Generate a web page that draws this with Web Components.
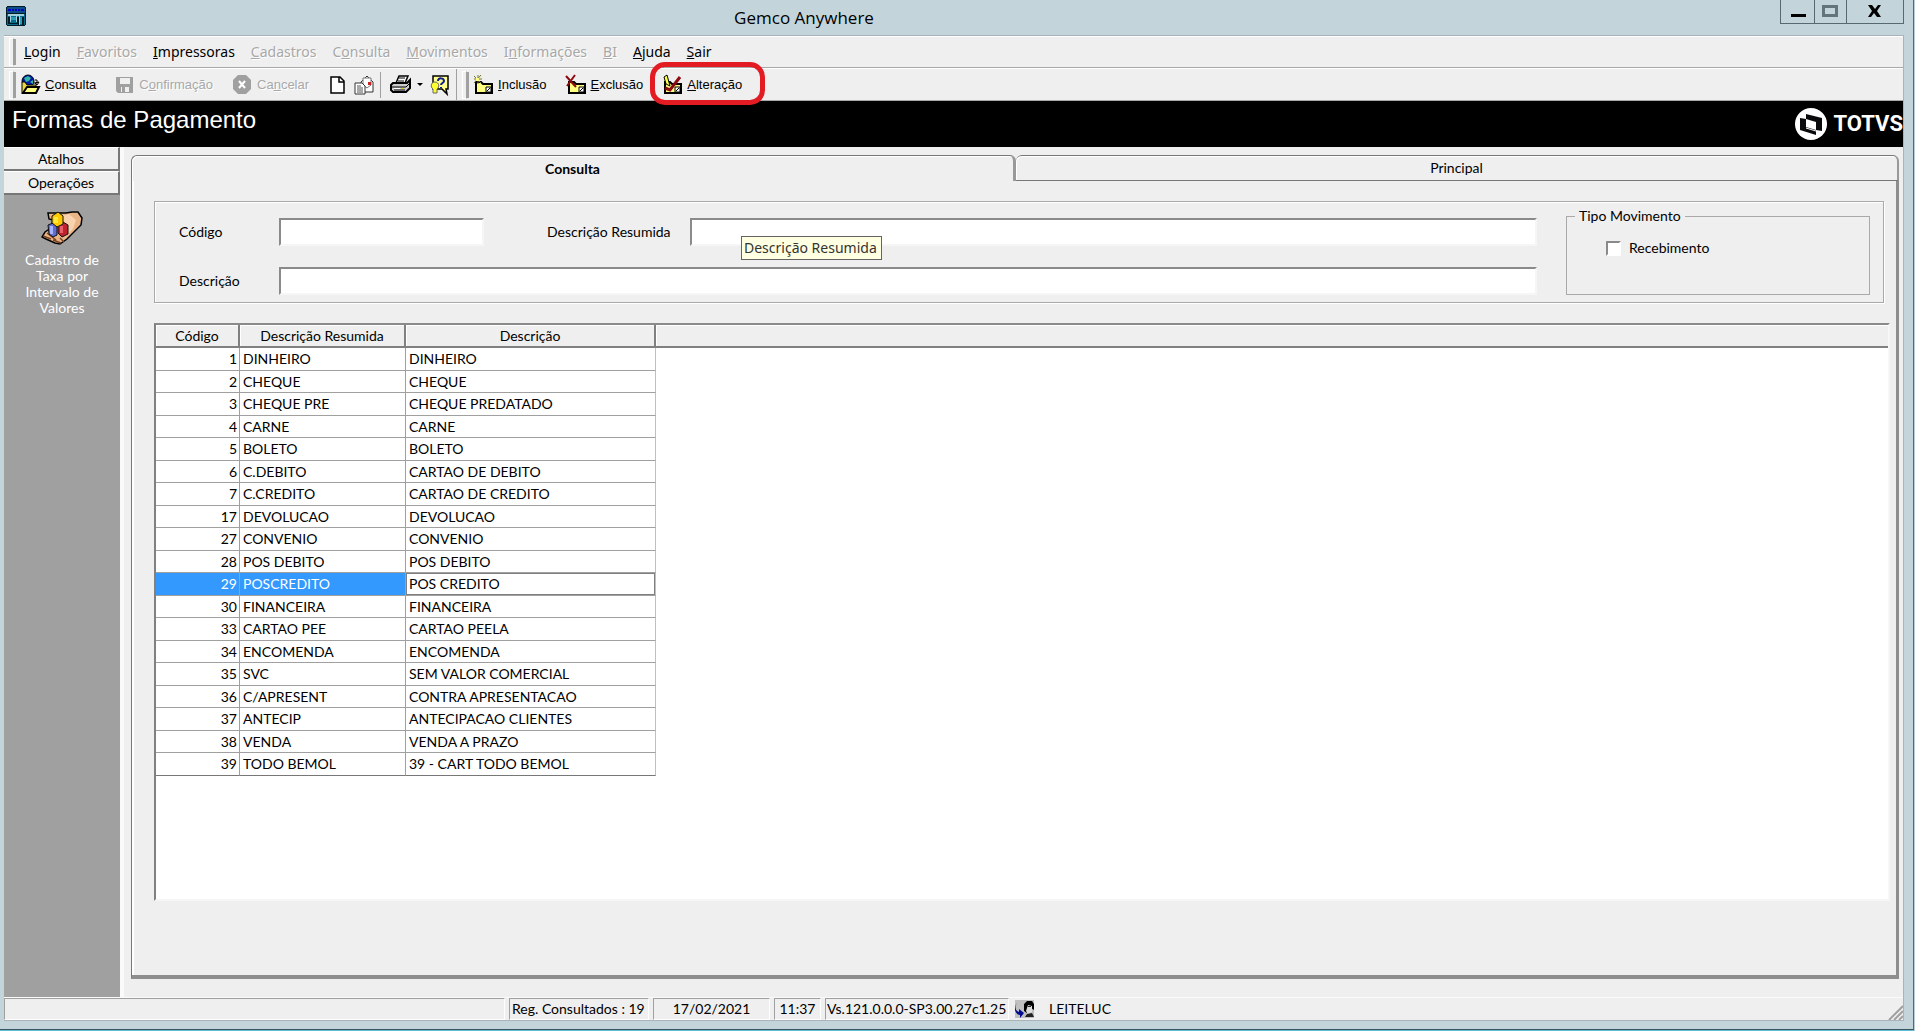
<!DOCTYPE html>
<html lang="pt-BR">
<head>
<meta charset="utf-8">
<title>Gemco Anywhere</title>
<style>
    html, body { height: 100%; margin: 0; }
    body { background: #c3d5db; color: #000; font: 14px/16px Lato, "Liberation Sans", sans-serif; }
</style>
</head>
<body>
<gemco-window>
    <title-bar slot="title">Gemco Anywhere</title-bar>

    <menu-bar slot="menu">
        <menu-item><u>L</u>ogin</menu-item>
        <menu-item disabled><u>F</u>avoritos</menu-item>
        <menu-item><u>I</u>mpressoras</menu-item>
        <menu-item disabled><u>C</u>adastros</menu-item>
        <menu-item disabled>C<u>o</u>nsulta</menu-item>
        <menu-item disabled><u>M</u>ovimentos</menu-item>
        <menu-item disabled>I<u>n</u>formações</menu-item>
        <menu-item disabled><u>B</u>I</menu-item>
        <menu-item><u>A</u>juda</menu-item>
        <menu-item><u>S</u>air</menu-item>
    </menu-bar>

    <tool-bar slot="tools"></tool-bar>
    <page-banner slot="banner">Formas de Pagamento</page-banner>

    <side-bar slot="side">
        <span slot="label">Cadastro de Taxa por Intervalo de Valores</span>
    </side-bar>

    <tab-pages>
        <span slot="tab1">Consulta</span>
        <span slot="tab2">Principal</span>
        <filter-box></filter-box>
        <data-grid></data-grid>
    </tab-pages>

    <status-bar slot="status"></status-bar>
</gemco-window>

<script>
class GemcoWindow extends HTMLElement {
    constructor() {
        super();
        this.attachShadow({ mode: 'open' });
        this.shadowRoot.innerHTML = `
            <style>
                :host { display: flex; flex-direction: column; min-height: 100vh; box-sizing: border-box; border-right: 1px solid #b8cdd6; }
                .frame { flex: 1; display: flex; flex-direction: column; padding: 0 9px 8px 4px; border-right: 1px solid #566a70; border-bottom: 1px solid #39565f; }
                .client { flex: 1; display: flex; flex-direction: column; background: #efefef; border: 1px solid #a9b4b8; border-left: 0; }
                .work { flex: 1; display: flex; }
                .work ::slotted(tab-pages) { flex: 1; }
                .task { height: 1px; background: #5fbdd5; }
            </style>
            <div class="frame">
                <slot name="title"></slot>
                <div class="client">
                    <slot name="menu"></slot>
                    <slot name="tools"></slot>
                    <slot name="banner"></slot>
                    <div class="work">
                        <slot name="side"></slot>
                        <slot></slot>
                    </div>
                    <slot name="status"></slot>
                </div>
            </div>
            <div class="task"></div>
        `;
    }
}
customElements.define('gemco-window', GemcoWindow);


class TitleBar extends HTMLElement {
    constructor() {
        super();
        this.attachShadow({ mode: 'open' });
        this.shadowRoot.innerHTML = `
            <style>
                :host { display: grid; grid-template-columns: 1fr auto 1fr; height: 35px; font: 17px/24px "Open Sans", "Noto Sans", sans-serif; }
                .app { margin: 6px 0 0 2px; }
                .text { padding: 6px 300px 0 0; }
                .buttons { display: flex; justify-self: end; height: 23px; border: 1px solid #566a70; border-top: 0; }
                button { width: 34px; padding: 0; border: 0; border-right: 1px solid #566a70; background: none; }
                button:nth-child(2) { width: 32px; }
                button:last-child { width: 56px; border: 0; }
                svg { display: block; }
            </style>
            <svg class="app" width="20" height="20" viewBox="0 0 20 20">
                <path d="M1 1h18v18H1z" fill="#086a8c"/>
                <path d="M0 1h20v5l-1 2H1L0 6z" fill="#0b4f86"/>
                <path d="M2 3h3v2H2zM6 3h2v2H6zM9 3h2v2H9zM12 3h2v2h-2zM15 3h3v2h-3z" fill="#0000c8"/>
                <path d="M2 8h16v2H2z" fill="#9fd0dc"/>
                <path d="M2 11h2v6h7v-6h2v8h-1v-1H2zM16 11h2v8h-2z" fill="#001c26"/>
                <path d="M4 10h1v6H4zM10 10h1v6h-1zM13 10h1v9h-1z" fill="#9fd0dc"/>
                <path d="M5 11h5v3H5zM14 11h2v7h-2z" fill="#2b9bb8"/>
                <path d="M1 .5h18M.5 1v18M19.5 1v18M1 19.500h18M1 7.500h18" stroke="#001c26" fill="none"/>
            </svg>
            <div class="text"><slot></slot></div>
            <div class="buttons">
                <button aria-label="Minimizar"><svg width="33" height="22"><path d="M10 13h15v3H10z"/></svg></button>
                <button aria-label="Maximizar"><svg width="31" height="22"><path d="M8.500 5.500h13v9h-13z" fill="none" stroke="#63757b" stroke-width="3"/></svg></button>
                <button aria-label="Fechar"><svg width="56" height="22"><path d="M21 4h4l3 4 3-4h3l-4 6 4 6h-4l-3-4-3 4h-3l4-6z"/></svg></button>
            </div>
        `;
    }
}
customElements.define('title-bar', TitleBar);


class MenuBar extends HTMLElement {
    constructor() {
        super();
        this.attachShadow({ mode: 'open' });
        this.shadowRoot.innerHTML = `
            <style>
                :host { display: flex; align-items: center; height: 32px; box-sizing: border-box; padding-left: 5px; border-top: 1px solid #fff; border-bottom: 1px solid #a9a9a9; }
                .grip { width: 3px; height: 26px; border: 1px solid #fff; border-right-color: #a0a0a0; box-shadow: 3px 0 0 -1px #a0a0a0; margin-right: 2px; }
            </style>
            <span class="grip"></span>
            <slot></slot>
        `;
    }
}
customElements.define('menu-bar', MenuBar);


class MenuItem extends HTMLElement {
    constructor() {
        super();
        this.attachShadow({ mode: 'open' });
        this.shadowRoot.innerHTML = `
            <style>
                :host { display: block; }
                button { padding: 0 8px; border: 0; background: none; color: #000; font: 14px/24px "Noto Sans", "Open Sans", sans-serif; }
                button:disabled { color: #a8a8a8; text-shadow: 1px 1px 0 #fff; }
            </style>
            <button${this.hasAttribute('disabled') ? ' disabled' : ''}><slot></slot></button>
        `;
    }
}
customElements.define('menu-item', MenuItem);


// folder used by the three record buttons
const folder = `
    <path d="M3 8h5l2 2h9v9H3z" fill="#ffff80" stroke="#000" stroke-width="2"/>
    <path d="M13 13h5v5h-5z" fill="#fff" stroke="#000"/><path d="M14 17l3-3" stroke="#000"/>`;

class ToolBar extends HTMLElement {
    constructor() {
        super();
        this.attachShadow({ mode: 'open' });
        this.shadowRoot.innerHTML = `
            <style>
                :host { display: flex; height: 33px; box-sizing: border-box; padding-left: 5px; border-top: 1px solid #fff; border-bottom: 1px solid #a9a9a9; }
                .grip { align-self: center; width: 3px; height: 26px; border: 1px solid #fff; border-right-color: #a0a0a0; box-shadow: 3px 0 0 -1px #a0a0a0; margin-right: 6px; }
                .group { display: flex; align-items: center; border-right: 1px solid #a0a0a0; margin-right: 5px; }
                .sep { width: 1px; height: 26px; background: #a0a0a0; margin-right: 9px; }
                button { display: flex; align-items: center; gap: 5px; height: 28px; padding: 0; margin-right: 19px; border: 0; background: none; color: #000; font: 13px/16px "Liberation Sans", sans-serif; }
                button:disabled { color: #a8a8a8; text-shadow: 1px 1px 0 #fff; }
                button.icon { margin-right: 6px; }
                .marked { position: relative; }
                .mark { position: absolute; inset: -9px -23px -6px -12px; border: 5px solid #e31b23; border-radius: 15px; pointer-events: none; z-index: 1; }
                svg { display: block; overflow: visible; }
            </style>
            <span class="grip"></span>
            <div class="group">
                <button>
                    <svg width="20" height="22" viewBox="0 0 20 22">
                        <circle cx="8" cy="7" r="6" fill="#0018a8" stroke="#001"/>
                        <path d="M4 4l4-2 3 2-2 3-3 1zM10 8l3-2v4z" fill="#30b8a0"/>
                        <path d="M2 8h3l2 3h9v8H2z" fill="#e8d840" stroke="#000"/>
                        <path d="M3 19l4-6h12l-3 6z" fill="#ffff80" stroke="#000" stroke-width="2"/>
                        <path d="M14 9h3v-3h-2M19 8l-2 3-2-2z" fill="none" stroke="#000"/>
                    </svg>
                    <span><u>C</u>onsulta</span>
                </button>
                <button disabled>
                    <svg width="19" height="20" viewBox="0 0 19 20">
                        <path d="M1 2h17v16H3l-2-2z" fill="#a0a0a0"/><path d="M5 3h10v6H5zM6 12h8v5H6z" fill="#efefef"/><path d="M7 12h3v5H7z" fill="#a0a0a0"/>
                    </svg>
                    <span>C<u>o</u>nfirmação</span>
                </button>
                <button disabled>
                    <svg width="20" height="20" viewBox="0 0 20 20">
                        <path d="M6 0h8l5 5v9l-5 5H6l-5-5V5z" fill="#a0a0a0"/><path d="M7 6l6 7M13 6l-6 7" stroke="#fff" stroke-width="2"/>
                    </svg>
                    <span>Ca<u>n</u>celar</span>
                </button>
                <button class="icon" aria-label="Novo">
                    <svg width="20" height="20" viewBox="0 0 20 20"><path d="M3 2h9l4 4v12H3z" fill="#fff" stroke="#000" stroke-width="1.500"/><path d="M11 2v5h5" fill="none" stroke="#000" stroke-width="1.500"/></svg>
                </button>
                <button class="icon" aria-label="Visualizar">
                    <svg width="20" height="20" viewBox="0 0 20 20">
                        <path d="M7 7l6-6 6 6v10H7z" fill="#fff" stroke="#333"/><path d="M9 3h8v7l-4 3-4-3z" fill="#fff" stroke="#777"/><path d="M14 7h3v3h-3z" fill="#c22"/>
                        <path d="M1 8h7l3 3v8H1z" fill="#fff" stroke="#333"/><path d="M3 11h4M3 13h6M3 15h6M3 17h6" stroke="#555"/>
                    </svg>
                </button>
                <span class="sep"></span>
                <button class="icon" aria-label="Imprimir">
                    <svg width="34" height="20" viewBox="0 0 34 20">
                        <path d="M6 8l3-7h9l-3 7z" fill="#fff" stroke="#000" stroke-width="1.500"/><path d="M9 3h6M8 6h6" stroke="#000"/>
                        <path d="M3 8h14l3-3v8l-4 4H3l-2-2v-5z" fill="#ccc" stroke="#000" stroke-width="2"/><path d="M2 12h14l3-3M4 15h11" stroke="#000" fill="none"/><path d="M4 13h6v1H4z" fill="#fff"/><path d="M11 13h3v1h-3z" fill="#dd0"/>
                        <path d="M27 8h6l-3 3z"/>
                    </svg>
                </button>
                <button class="icon" aria-label="Ajuda">
                    <svg width="20" height="20" viewBox="0 0 20 20">
                        <path d="M3 1h15v13h-2l1 5-5-5H3z" fill="#ffff90" stroke="#000" stroke-width="1.500"/>
                        <path d="M8 6c0-4 6-3 6 0 0 2-3 2-3 4M11 12v1" fill="none" stroke="#111c90" stroke-width="2"/>
                        <path d="M5 7c-4 0-5 5-2 7v4h4v-4c3-2 2-7-2-7z" fill="#ffff30" stroke="#666"/>
                    </svg>
                </button>
            </div>
            <span class="grip"></span>
            <div class="group">
                <button>
                    <svg width="20" height="22" viewBox="0 0 20 22">${folder}<path d="M1 2l7 7M8 1L1 9M5 1v9M1 5h8" stroke="#77772a"/><path d="M3 4h3v3H3z" fill="#ffff80"/></svg>
                    <span><u>I</u>nclusão</span>
                </button>
                <button>
                    <svg width="20" height="22" viewBox="0 0 20 22">${folder}<path d="M0 2l10 11M9 1L1 12" stroke="#8c0b10" stroke-width="2"/></svg>
                    <span><u>E</u>xclusão</span>
                </button>
                <button class="marked">
                    <svg width="20" height="22" viewBox="0 0 20 22">${folder}<path d="M2 3l3-2 3 11-4-2z" fill="#ffff40" stroke="#000"/><path d="M3 14l5 2L18 3" fill="none" stroke="#8c0b10" stroke-width="3"/></svg>
                    <span><u>A</u>lteração</span>
                    <span class="mark"></span>
                </button>
            </div>
        `;
    }
}
customElements.define('tool-bar', ToolBar);


class PageBanner extends HTMLElement {
    constructor() {
        super();
        this.attachShadow({ mode: 'open' });
        this.shadowRoot.innerHTML = `
            <style>
                :host { display: flex; justify-content: space-between; height: 46px; padding-left: 8px; background: #000; color: #fff; }
                h1 { margin: 3px 0 0; font: 24px/32px "Liberation Sans", sans-serif; }
                .logo { display: flex; align-items: center; gap: 6px; font: bold 22px/32px Roboto, "Liberation Sans", sans-serif; }
            </style>
            <h1><slot></slot></h1>
            <div class="logo">
                <svg width="32" height="32" viewBox="0 0 32 32">
                    <circle cx="16" cy="16" r="16" fill="#fff"/>
                    <path d="M11 6l16 4v13l-6-1v5L5 22V10l6 1z" fill="#0a0a0c"/>
                    <path d="M11 11l10 3v8l-10-3z" fill="#fff"/>
                    <path d="M11 20l10 3" fill="none" stroke="#fff"/>
                </svg>
                <span>TOTVS</span>
            </div>
        `;
    }
}
customElements.define('page-banner', PageBanner);


class SideBar extends HTMLElement {
    constructor() {
        super();
        this.attachShadow({ mode: 'open' });
        this.shadowRoot.innerHTML = `
            <style>
                :host { display: flex; flex-direction: column; width: 116px; background: #a0a0a0; border-right: 4px solid #fafafa; }
                button { height: 24px; padding: 0; border: 1px solid; border-width: 1px 2px 2px 0; border-color: #fff #777 #777; background: #efefef; color: #000; font: inherit; }
                a { display: flex; flex-direction: column; align-items: center; padding: 16px 18px 0; color: #fff; text-align: center; text-decoration: none; }
                svg { margin-bottom: 7px; }
            </style>
            <button>Atalhos</button>
            <button>Operações</button>
            <a href="#">
                <svg width="42" height="34" viewBox="0 0 42 34">
                    <path d="M7 2h18l6-1h6l4 6-1 7-14 14-7 5-5-1-9-4-4-2 3-5 6-4 2-8-4-1z" fill="#e9b487" stroke="#000" stroke-width="1.500"/>
                    <path d="M20 5l8-2 7 6-3 9-8 8" fill="#f8d3ae"/>
                    <path d="M2 25l8 3M6 22l9 7M12 29l8 3M19 27l4 4" stroke="#7a4322" stroke-width="1.500"/>
                    <path d="M7 14l5-2 4 3v9l-4 2-4-3z" fill="#5f6fd0" stroke="#111"/><path d="M9 15h3v8H9z" fill="#a8b4ff"/>
                    <path d="M17 14l5-3 5 3v9l-6 3-4-4z" fill="#c2222d" stroke="#111"/><path d="M19 15h3v7h-3z" fill="#e8606a"/>
                    <path d="M11 5l6-4 5 4v8l-6 3-5-4z" fill="#ffc800" stroke="#111"/><path d="M13 6h4v6h-4z" fill="#ffe838"/>
                </svg>
                <slot name="label"></slot>
            </a>
        `;
    }
}
customElements.define('side-bar', SideBar);


class TabPages extends HTMLElement {
    constructor() {
        super();
        this.attachShadow({ mode: 'open' });
        this.shadowRoot.innerHTML = `
            <style>
                :host { display: flex; flex-direction: column; padding: 8px 4px 18px 7px; }
                .tabs { display: flex; }
                button { flex: 1; height: 26px; padding: 0; border: 1px solid #777; border-right: 3px solid #999; border-bottom: 0; border-radius: 6px 6px 0 0; background: #efefef; box-shadow: inset 1px 1px 0 #fff; color: #000; font: inherit; }
                button.on { font-weight: bold; }
                button + button { border-left: 0; border-bottom: 1px solid #777; border-right-width: 2px; }
                .page { flex: 1; display: flex; flex-direction: column; gap: 20px; padding: 20px 6px 74px 22px; border: 1px solid #777; border-width: 0 3px 4px 1px; border-right-color: #8e8e8e; border-bottom-color: #8e8e8e; box-shadow: inset 2px 0 0 #fff; }
            </style>
            <div class="tabs" role="tablist">
                <button class="on" role="tab" aria-selected="true"><slot name="tab1"></slot></button>
                <button role="tab"><slot name="tab2"></slot></button>
            </div>
            <div class="page"><slot></slot></div>
        `;
    }
}
customElements.define('tab-pages', TabPages);


class FilterBox extends HTMLElement {
    constructor() {
        super();
        this.attachShadow({ mode: 'open' });
        this.shadowRoot.innerHTML = `
            <style>
                :host { display: flex; box-sizing: border-box; height: 102px; margin-right: 6px; padding: 12px 13px 0 24px; border: 1px solid #a9a9a9; box-shadow: 1px 1px 0 #fff, inset 1px 1px 0 #fff; }
                form { flex: 1; display: grid; grid-template-columns: 100px 205px 63px 143px 1fr; grid-auto-rows: 28px; row-gap: 21px; align-items: center; padding-top: 4px; margin-right: 29px; }
                input[type=text] { display: block; width: 100%; height: 28px; box-sizing: border-box; border: 2px solid; border-color: #8a8a8a #f6f6f6 #f6f6f6 #8a8a8a; background: #fff; font: inherit; }
                label[for=resumida] { grid-column: 4; }
                .wide { grid-column: 2 / -1; }
                .hint { position: relative; grid-column: 5; }
                .tip { position: absolute; left: 51px; top: 18px; padding: 2px 4px 2px 2px; border: 1px solid #646464; background: #ffffe1; color: #333; font: 14px/18px "Noto Sans", "Open Sans", sans-serif; white-space: nowrap; }
                fieldset { width: 304px; height: 87px; box-sizing: border-box; margin: -6px 0 0; padding: 16px 39px 0; border: 1px solid #a9a9a9; }
                legend { margin-left: -31px; padding: 0 4px; }
                .check { display: flex; align-items: center; gap: 8px; }
                .check input { appearance: none; width: 15px; height: 15px; margin: 0; border: 2px solid; border-color: #8a8a8a #fff #fff #8a8a8a; background: #fff; }
            </style>
            <form>
                <label for="codigo">Código</label>
                <input type="text" id="codigo">
                <label for="resumida">Descrição Resumida</label>
                <div class="hint">
                    <input type="text" id="resumida" aria-describedby="tip">
                    <span class="tip" id="tip" role="tooltip">Descrição Resumida</span>
                </div>
                <label for="descricao">Descrição</label>
                <input type="text" id="descricao" class="wide">
            </form>
            <fieldset>
                <legend>Tipo Movimento</legend>
                <label class="check"><input type="checkbox">Recebimento</label>
            </fieldset>
        `;
    }
}
customElements.define('filter-box', FilterBox);


const formas = [
    [1, 'DINHEIRO', 'DINHEIRO'],
    [2, 'CHEQUE', 'CHEQUE'],
    [3, 'CHEQUE PRE', 'CHEQUE PREDATADO'],
    [4, 'CARNE', 'CARNE'],
    [5, 'BOLETO', 'BOLETO'],
    [6, 'C.DEBITO', 'CARTAO DE DEBITO'],
    [7, 'C.CREDITO', 'CARTAO DE CREDITO'],
    [17, 'DEVOLUCAO', 'DEVOLUCAO'],
    [27, 'CONVENIO', 'CONVENIO'],
    [28, 'POS DEBITO', 'POS DEBITO'],
    [29, 'POSCREDITO', 'POS CREDITO'],
    [30, 'FINANCEIRA', 'FINANCEIRA'],
    [33, 'CARTAO PEE', 'CARTAO PEELA'],
    [34, 'ENCOMENDA', 'ENCOMENDA'],
    [35, 'SVC', 'SEM VALOR COMERCIAL'],
    [36, 'C/APRESENT', 'CONTRA APRESENTACAO'],
    [37, 'ANTECIP', 'ANTECIPACAO CLIENTES'],
    [38, 'VENDA', 'VENDA A PRAZO'],
    [39, 'TODO BEMOL', '39 - CART TODO BEMOL']
];

class DataGrid extends HTMLElement {
    constructor() {
        super();
        this.attachShadow({ mode: 'open' });
        const rows = formas.map(([cod, res, desc]) =>
            `<tr${cod === 29 ? ' class="sel"' : ''}><td>${cod}</td><td>${res}</td><td>${desc}</td><td></td></tr>`
        ).join('');
        this.shadowRoot.innerHTML = `
            <style>
                :host { flex: 1; display: block; border: 2px solid; border-color: #8a8a8a #f6f6f6 #f6f6f6 #808080; background: #fff; }
                table { width: 100%; table-layout: fixed; border-collapse: separate; border-spacing: 0; }
                th { height: 23px; padding: 0; box-sizing: border-box; border-right: 2px solid #808080; border-bottom: 2px solid #808080; background: #efefef; box-shadow: inset 1px 1px 0 #fff; font-weight: normal; }
                th:last-child { border-right: 0; }
                td { height: 22px; box-sizing: border-box; padding: 0 3px; border-right: 1px solid #a0a0a0; border-bottom: 1px solid #a0a0a0; }
                tr:nth-child(odd) td { height: 23px; }
                td:first-child { padding-right: 2px; text-align: right; }
                td:nth-child(3) { border-right-color: #c0c0c0; }
                td:last-child { border: 0; }
                tr:last-child td:not(:last-child) { border-bottom-color: #777; }
                .sel td:nth-child(-n+2) { background: #3399ff; color: #fff; }
                .sel td:nth-child(3) { box-shadow: inset 0 0 0 1px #808080; }
            </style>
            <table>
                <colgroup><col style="width: 84px"><col style="width: 166px"><col style="width: 250px"><col></colgroup>
                <thead><tr><th>Código</th><th>Descrição Resumida</th><th>Descrição</th><th></th></tr></thead>
                <tbody>${rows}</tbody>
            </table>
        `;
    }
}
customElements.define('data-grid', DataGrid);


class StatusBar extends HTMLElement {
    constructor() {
        super();
        this.attachShadow({ mode: 'open' });
        this.shadowRoot.innerHTML = `
            <style>
                :host { display: flex; gap: 4px; height: 22px; border-top: 1px solid #fafafa; }
                div { box-sizing: border-box; padding: 0 2px; border: 1px solid; border-color: #a0a0a0 #fff #fff #a0a0a0; line-height: 20px; white-space: nowrap; }
                .msg { width: 501px; }
                .reg { width: 140px; }
                .date { width: 117px; text-align: center; }
                .time { width: 47px; text-align: center; }
                .ver { width: 184px; padding: 0 1px; }
                .user { flex: 1; display: flex; align-items: center; gap: 15px; border: 0; }
                .size { align-self: flex-end; }
            </style>
            <div class="msg"></div>
            <div class="reg">Reg. Consultados : 19</div>
            <div class="date">17/02/2021</div>
            <div class="time">11:37</div>
            <div class="ver">Vs.121.0.0.0-SP3.00.27c1.25</div>
            <div class="user">
                <svg width="19" height="18" viewBox="0 0 19 18">
                    <path d="M0 0h19v18H0z" fill="#c0c0c0"/>
                    <path d="M9 4l3-3h5l2 3v6l-3-2-3 1-1 4-3-2z"/><path d="M13 5l4 1v6l-4 2-2-3z" fill="#ddd"/><path d="M12 14l5-1 2 4h-9zM13 6h3v1h-3z" fill="#222"/>
                    <path d="M2 3c-3 5-1 8 2 9V9l5 4-4 5v-3C0 14-2 8 2 3z" fill="#000c90"/>
                </svg>
                <span>LEITELUC</span>
            </div>
            <svg class="size" width="15" height="15"><path d="M1 15L15 1M6 15l9-9M11 15l4-4" stroke="#a0a0a0" stroke-width="2"/></svg>
        `;
    }
}
customElements.define('status-bar', StatusBar);
</script>
</body>
</html>
